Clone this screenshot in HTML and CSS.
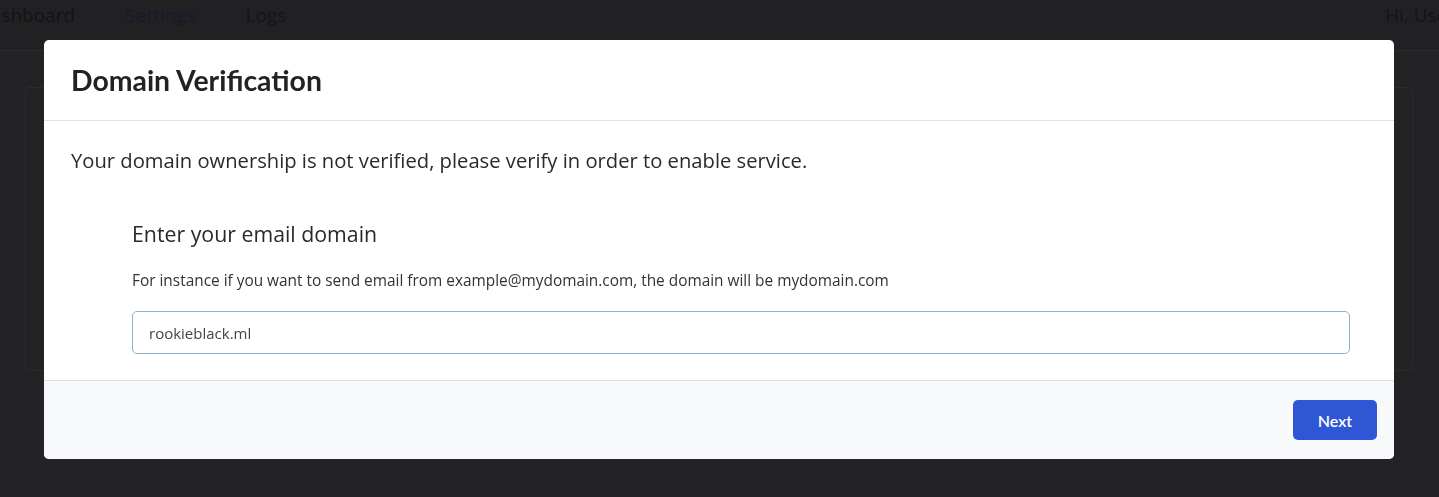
FILE: index.html
```html
<!DOCTYPE html>
<html lang="en">
<head>
    <meta charset="UTF-8">
    <meta name="viewport" content="width=device-width, initial-scale=1.0">
    <title>Domain Verification</title>
    <link rel="stylesheet" href="styles.css">
</head>
<body>
    <nav class="topnav">
        <div class="nav-links">
            <a class="nav-link">Dashboard</a>
            <a class="nav-link active">Settings</a>
            <a class="nav-link">Logs</a>
        </div>
        <span class="nav-user">Hi, User</span>
    </nav>

    <div class="page">
        <div class="card"></div>
    </div>

    <div class="backdrop">
        <div class="modal">
            <div class="modal-header">
                <h2>Domain Verification</h2>
            </div>
            <div class="modal-body">
                <p class="lead">Your domain ownership is not verified, please verify in order to enable service.</p>
                <div class="step">
                    <h3>Enter your email domain</h3>
                    <p class="hint">For instance if you want to send email from example@mydomain.com, the domain will be mydomain.com</p>
                    <input type="text" class="field" value="rookieblack.ml">
                </div>
            </div>
            <div class="modal-footer">
                <button class="btn-primary">Next</button>
            </div>
        </div>
    </div>
</body>
</html>
```

FILE: styles.css
```css
* { box-sizing: border-box; }

body {
    margin: 0;
    font-family: "Open Sans", "Noto Sans", sans-serif;
    background-color: #232325;
    height: 497px;
    overflow: hidden;
}

.topnav {
    height: 51px;
    display: flex;
    justify-content: space-between;
    align-items: flex-start;
    padding-top: 1px;
    border-bottom: 1px solid #2b2b2d;
    background-color: #212123;
}
.nav-links { display: flex; gap: 50px; margin-left: -23px; }
.nav-link { font-size: 19px; line-height: 28px; color: #141416; }
.nav-link.active { color: #171a29; }
.nav-user { font-size: 19px; line-height: 28px; color: #141416; margin-right: -16px; }

.page { padding: 36px 26px 0 25px; }
.card {
    height: 284px;
    border: 1px solid #2c2c2e;
    border-radius: 4px;
}

.backdrop {
    position: fixed;
    top: 0; left: 0; right: 0; bottom: 0;
    padding: 40px 45px 0 44px;
}

.modal {
    background-color: #fff;
    border-radius: 5px;
    overflow: hidden;
    height: 419px;
    display: flex;
    flex-direction: column;
}

.modal-header {
    height: 81px;
    padding: 0 27px;
    display: flex;
    align-items: center;
    border-bottom: 1px solid #dee2e6;
}
.modal-header h2 {
    margin: 0;
    font-family: Lato, sans-serif;
    font-size: 28.4px;
    font-weight: 700;
    color: #222;
}

.modal-body {
    flex: 1;
    padding: 25px 27px 0 27px;
    border-bottom: 1px solid #dee2e6;
}
.lead {
    margin: 0;
    font-size: 20.2px;
    color: #2a2a2a;
    line-height: 28px;
}

.step { padding: 46px 17px 0 61px; }
.step h3 {
    margin: 0;
    font-size: 21.3px;
    font-weight: 400;
    color: #2a2a2a;
    line-height: 28px;
}
.hint {
    margin: 22px 0 0 0;
    font-size: 15.4px;
    color: #333;
    line-height: 22px;
}
.field {
    display: block;
    width: 100%;
    height: 43px;
    margin-top: 19px;
    padding: 0 16px;
    border: 1px solid #8fb3c6;
    border-radius: 5px;
    font-family: "Open Sans", sans-serif;
    font-size: 15px;
    color: #444;
}

.modal-footer {
    height: 78px;
    background-color: #f8f9fb;
    display: flex;
    justify-content: flex-end;
    align-items: center;
    padding: 0 17px;
}
.btn-primary {
    width: 84px;
    height: 40px;
    background-color: #2f56d5;
    color: #fff;
    border: none;
    border-radius: 5px;
    font-family: Lato, sans-serif;
    font-size: 16px;
    font-weight: 600;
    cursor: pointer;
}
```
